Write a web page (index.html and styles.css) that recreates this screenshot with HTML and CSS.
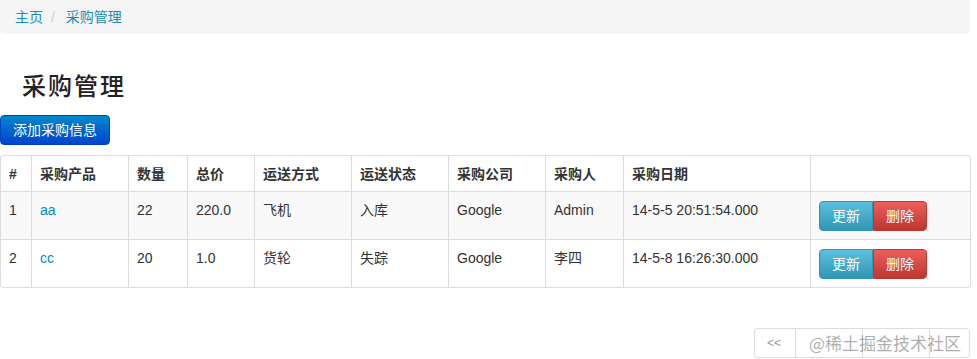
FILE: index.html
```html
<!DOCTYPE html>
<html lang="zh-CN">
<head>
    <meta charset="UTF-8">
    <title>采购管理</title>
    <link rel="stylesheet" href="styles.css">
</head>
<body>
    <div class="container">
        <ul class="breadcrumb">
            <li><a href="#">主页</a><span class="divider">/</span></li>
            <li><a href="#">采购管理</a></li>
        </ul>

        <h1 class="page-title">采购管理</h1>

        <button class="btn btn-primary add-btn">添加采购信息</button>

        <table class="table">
            <colgroup>
                <col class="c-id">
                <col class="c-product">
                <col class="c-qty">
                <col class="c-price">
                <col class="c-ship">
                <col class="c-state">
                <col class="c-company">
                <col class="c-person">
                <col class="c-date">
                <col class="c-ops">
            </colgroup>
            <thead>
                <tr>
                    <th>#</th>
                    <th>采购产品</th>
                    <th>数量</th>
                    <th>总价</th>
                    <th>运送方式</th>
                    <th>运送状态</th>
                    <th>采购公司</th>
                    <th>采购人</th>
                    <th>采购日期</th>
                    <th></th>
                </tr>
            </thead>
            <tbody>
                <tr class="odd">
                    <td>1</td>
                    <td><a href="#">aa</a></td>
                    <td>22</td>
                    <td>220.0</td>
                    <td>飞机</td>
                    <td>入库</td>
                    <td>Google</td>
                    <td>Admin</td>
                    <td>14-5-5 20:51:54.000</td>
                    <td class="ops">
                        <div class="btn-group">
                            <button class="btn btn-info">更新</button><button class="btn btn-danger">删除</button>
                        </div>
                    </td>
                </tr>
                <tr>
                    <td>2</td>
                    <td><a href="#">cc</a></td>
                    <td>20</td>
                    <td>1.0</td>
                    <td>货轮</td>
                    <td>失踪</td>
                    <td>Google</td>
                    <td>李四</td>
                    <td>14-5-8 16:26:30.000</td>
                    <td class="ops">
                        <div class="btn-group">
                            <button class="btn btn-info">更新</button><button class="btn btn-danger">删除</button>
                        </div>
                    </td>
                </tr>
            </tbody>
        </table>

        <div class="pager-row">
            <ul class="pagination">
                <li><a href="#">&lt;&lt;</a></li>
                <li><a href="#"></a></li>
                <li><a href="#"></a></li>
                <li class="last"><a href="#"></a></li>
            </ul>
            <span class="watermark">@稀土掘金技术社区</span>
        </div>
    </div>
</body>
</html>
```

FILE: styles.css
```css
body {
    margin: 0;
    font-family: "Liberation Sans", "Noto Sans CJK SC", sans-serif;
    font-size: 14px;
    line-height: 20px;
    color: #333;
    background: #fff;
}
a {
    color: #0088cc;
    text-decoration: none;
}
.container {
    width: 970px;
}
.breadcrumb {
    margin: 0;
    padding: 7px 15px;
    list-style: none;
    background: #f5f5f5;
    border-radius: 0 0 4px 4px;
}
.breadcrumb li {
    display: inline-block;
}
.breadcrumb a {
    color: #1a8fb5;
}
.breadcrumb .divider {
    padding: 0 7px 0 8px;
    color: #ccc;
}
.page-title {
    margin: 34px 0 13px;
    padding-left: 22px;
    font-family: "Noto Sans CJK SC", serif;
    font-size: 24px;
    font-weight: 500;
    letter-spacing: 2px;
    line-height: 34px;
    color: #222;
}
.btn {
    display: inline-block;
    padding: 4px 12px;
    font-family: inherit;
    font-size: 14px;
    line-height: 20px;
    color: #fff;
    border: 1px solid rgba(0,0,0,0.15);
    border-radius: 4px;
    cursor: pointer;
}
.btn-primary {
    background: linear-gradient(#0088cc, #0044cc);
    border-color: #0044cc;
}
.add-btn {
    height: 30px;
    margin-bottom: 10px;
}
.btn-group {
    display: inline-flex;
    margin-top: 1px;
}
.btn-group .btn {
    border-radius: 0;
    padding: 4px 12px;
    height: 30px;
}
.btn-group .btn:first-child {
    border-radius: 4px 0 0 4px;
}
.btn-group .btn:last-child {
    border-radius: 0 4px 4px 0;
}
.btn-info {
    background: linear-gradient(#5bc0de, #2f96b4);
    border-color: #2f96b4;
}
.btn-danger {
    background: linear-gradient(#ee5f5b, #bd362f);
    border-color: #bd362f;
}
.table {
    width: 970px;
    table-layout: fixed;
    border-collapse: separate;
    border-spacing: 0;
    border: 1px solid #ddd;
    border-left: 0;
    border-radius: 4px;
}
.table th,
.table td {
    padding: 8px;
    text-align: left;
    vertical-align: top;
    border-left: 1px solid #ddd;
    border-top: 1px solid #ddd;
    white-space: nowrap;
}
.table th {
    padding-bottom: 7px;
    border-top: 0;
    font-weight: bold;
    color: #333;
}
.table td {
    height: 30px;
}
.table tr.odd td {
    background: #f9f9f9;
}
.table td.ops {
    vertical-align: middle;
}
.c-id { width: 31px; }
.c-product { width: 97px; }
.c-qty { width: 59px; }
.c-price { width: 67px; }
.c-ship { width: 97px; }
.c-state { width: 97px; }
.c-company { width: 97px; }
.c-person { width: 78px; }
.c-date { width: 187px; }
.c-ops { width: 160px; }
.pager-row {
    position: relative;
    display: flex;
    justify-content: flex-end;
    margin-top: 40px;
}
.pagination {
    display: flex;
    margin: 0;
    padding: 0;
    list-style: none;
    border: 1px solid #ddd;
    border-radius: 4px;
    box-shadow: 0 1px 2px rgba(0,0,0,0.05);
}
.pagination li a {
    display: block;
    height: 20px;
    padding: 4px 12px;
    border-left: 1px solid #ddd;
    font-size: 12px;
    color: #999;
    min-width: 42px;
    box-sizing: content-box;
}
.pagination li:first-child a {
    border-left: 0;
    min-width: 16px;
}
.pagination li.last a {
    min-width: 15px;
}
.watermark {
    position: absolute;
    right: 9px;
    top: 3px;
    font-family: "Noto Sans CJK SC", sans-serif;
    font-size: 17px;
    line-height: 24px;
    color: rgba(120,120,120,0.6);
}
```
